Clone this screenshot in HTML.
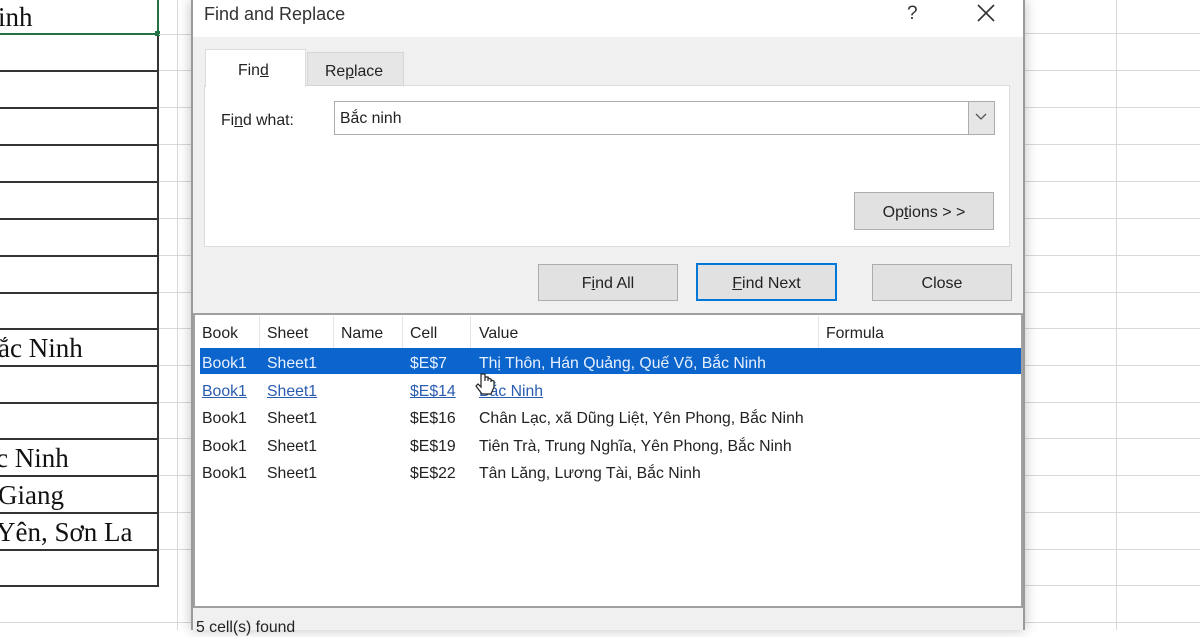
<!DOCTYPE html>
<html><head><meta charset="utf-8"><style>
*{margin:0;padding:0;box-sizing:border-box}
body{width:1200px;height:630px;overflow:hidden;background:#fff;position:relative;font-family:"Liberation Sans","DejaVu Sans",sans-serif;font-size:16px;color:#222}
.a{position:absolute}
.hl{position:absolute;height:2px;background:#333}
.gl{position:absolute;height:1px;background:#d8d8d8}
.vg{position:absolute;width:1px;background:#d8d8d8;top:0;height:630px}
.serif{font-family:"Liberation Serif",serif;font-size:27px;color:#111;position:absolute;left:0}
.btn{position:absolute;background:#e1e1e1;border:1px solid #adadad;text-align:center;font-size:16px;color:#222}
.t{position:absolute;font-size:15.8px;white-space:nowrap}
u{text-decoration:underline}
</style></head><body>
<div class="vg" style="left:157px;background:#333;width:2px;height:587px"></div>
<div class="vg" style="left:177px"></div>
<div class="a" style="left:0;top:33px;width:157px;height:2px;background:#217346"></div>
<div class="a" style="left:155px;top:31px;width:5px;height:5px;background:#217346"></div>
<div class="a" style="left:157px;top:0;width:2px;height:33px;background:#217346"></div>
<div class="hl" style="top:70px;width:157px"></div><div class="hl" style="top:107px;width:157px"></div>
<div class="hl" style="top:144px;width:157px"></div><div class="hl" style="top:181px;width:157px"></div>
<div class="hl" style="top:218px;width:157px"></div><div class="hl" style="top:255px;width:157px"></div>
<div class="hl" style="top:292px;width:157px"></div><div class="hl" style="top:328px;width:157px"></div>
<div class="hl" style="top:365px;width:157px"></div><div class="hl" style="top:402px;width:157px"></div>
<div class="hl" style="top:438px;width:157px"></div><div class="hl" style="top:475px;width:157px"></div>
<div class="hl" style="top:512px;width:157px"></div><div class="hl" style="top:549px;width:157px"></div>
<div class="hl" style="top:585px;width:157px"></div>
<div class="gl" style="left:159px;top:34px;width:33px"></div><div class="gl" style="left:159px;top:70px;width:33px"></div><div class="gl" style="left:159px;top:107px;width:33px"></div><div class="gl" style="left:159px;top:144px;width:33px"></div><div class="gl" style="left:159px;top:181px;width:33px"></div><div class="gl" style="left:159px;top:218px;width:33px"></div><div class="gl" style="left:159px;top:255px;width:33px"></div><div class="gl" style="left:159px;top:292px;width:33px"></div><div class="gl" style="left:159px;top:328px;width:33px"></div><div class="gl" style="left:159px;top:365px;width:33px"></div><div class="gl" style="left:159px;top:402px;width:33px"></div><div class="gl" style="left:159px;top:438px;width:33px"></div><div class="gl" style="left:159px;top:475px;width:33px"></div><div class="gl" style="left:159px;top:512px;width:33px"></div><div class="gl" style="left:159px;top:549px;width:33px"></div><div class="gl" style="left:0;top:622px;width:192px"></div>
<div class="serif" style="top:2px;left:-2px">inh</div>
<div class="serif" style="top:333px;left:-2px">ắc Ninh</div>
<div class="serif" style="top:443px;left:-4px">c Ninh</div>
<div class="serif" style="top:480px;left:-2px">Giang</div>
<div class="serif" style="top:517px;left:-4px">Yên, Sơn La</div>
<div class="vg" style="left:1116px"></div>
<div class="gl" style="left:1024px;top:33px;width:176px"></div><div class="gl" style="left:1024px;top:70px;width:176px"></div><div class="gl" style="left:1024px;top:107px;width:176px"></div><div class="gl" style="left:1024px;top:144px;width:176px"></div><div class="gl" style="left:1024px;top:181px;width:176px"></div><div class="gl" style="left:1024px;top:218px;width:176px"></div><div class="gl" style="left:1024px;top:255px;width:176px"></div><div class="gl" style="left:1024px;top:292px;width:176px"></div><div class="gl" style="left:1024px;top:328px;width:176px"></div><div class="gl" style="left:1024px;top:365px;width:176px"></div><div class="gl" style="left:1024px;top:402px;width:176px"></div><div class="gl" style="left:1024px;top:438px;width:176px"></div><div class="gl" style="left:1024px;top:475px;width:176px"></div><div class="gl" style="left:1024px;top:512px;width:176px"></div><div class="gl" style="left:1024px;top:549px;width:176px"></div><div class="gl" style="left:1024px;top:585px;width:176px"></div><div class="gl" style="left:1024px;top:622px;width:176px"></div>
<div class="a" style="left:191px;top:0;width:834px;height:630px;background:#f0f0f0;border-left:2px solid #9a9a9a;border-right:2px solid #9a9a9a;box-shadow:0 0 12px rgba(0,0,0,.25)"></div>
<div class="a" style="left:193px;top:0;width:830px;height:37px;background:#fff"></div>
<div class="t" style="left:204px;top:4px;font-size:18px;color:#333">Find and Replace</div>
<div class="t" style="left:907px;top:3px;font-size:19px;color:#333">?</div>
<svg class="a" style="left:977px;top:4px" width="18" height="18"><path d="M1 1L17 17M17 1L1 17" stroke="#333" stroke-width="1.6"/></svg>
<div class="a" style="left:204px;top:85px;width:806px;height:162px;background:#fff;border:1px solid #dcdcdc"></div>
<div class="a" style="left:307px;top:52px;width:97px;height:34px;background:#e6e6e6;border:1px solid #d6d6d6"></div>
<div class="a" style="left:205px;top:49px;width:101px;height:38px;background:#fff;border:1px solid #dcdcdc;border-bottom:none"></div>
<div class="t" style="left:238px;top:62px">Fin<u>d</u></div>
<div class="t" style="left:325px;top:63px">Re<u>p</u>lace</div>
<div class="t" style="left:221px;top:112px">Fi<u>n</u>d what:</div>
<div class="a" style="left:334px;top:101px;width:661px;height:34px;background:#fff;border:1px solid #acacac"></div>
<div class="a" style="left:968px;top:102px;width:26px;height:32px;background:#e6e6e6;border-left:1px solid #acacac"></div>
<svg class="a" style="left:975px;top:113px" width="12" height="8"><path d="M1 1L6 6L11 1" stroke="#555" fill="none" stroke-width="1.3"/></svg>
<div class="t" style="left:340px;top:110px">Bắc ninh</div>
<div class="btn" style="left:854px;top:192px;width:140px;height:38px;line-height:39px">Op<u>t</u>ions &gt; &gt;</div>
<div class="btn" style="left:538px;top:264px;width:140px;height:37px;line-height:38px">F<u>i</u>nd All</div>
<div class="btn" style="left:696px;top:263px;width:141px;height:38px;line-height:37px;border:2px solid #0078d7"><u>F</u>ind Next</div>
<div class="btn" style="left:872px;top:264px;width:140px;height:37px;line-height:38px">Close</div>
<div class="a" style="left:193px;top:313px;width:830px;height:295px;background:#fff;border:2px solid #a0a0a0"></div>
<div class="a" style="left:259px;top:316px;width:1px;height:32px;background:#e5e5e5"></div>
<div class="a" style="left:333px;top:316px;width:1px;height:32px;background:#e5e5e5"></div>
<div class="a" style="left:402px;top:316px;width:1px;height:32px;background:#e5e5e5"></div>
<div class="a" style="left:470px;top:316px;width:1px;height:32px;background:#e5e5e5"></div>
<div class="a" style="left:818px;top:316px;width:1px;height:32px;background:#e5e5e5"></div>
<div class="t" style="left:202px;top:325px">Book</div><div class="t" style="left:267px;top:325px">Sheet</div><div class="t" style="left:341px;top:325px">Name</div><div class="t" style="left:410px;top:325px">Cell</div><div class="t" style="left:479px;top:325px">Value</div><div class="t" style="left:826px;top:325px">Formula</div>
<div class="a" style="left:200px;top:348px;width:821px;height:26px;background:#0b65cc"></div>
<div class="t" style="left:202px;top:355px;color:#e8f0ff">Book1</div><div class="t" style="left:267px;top:355px;color:#e8f0ff">Sheet1</div><div class="t" style="left:410px;top:355px;color:#e8f0ff">$E$7</div><div class="t" style="left:479px;top:355px;color:#e8f0ff">Thị Thôn, Hán Quảng, Quế Võ, Bắc Ninh</div>
<div class="t" style="left:202px;top:383px;color:#2a5db0"><u>Book1</u></div><div class="t" style="left:267px;top:383px;color:#2a5db0"><u>Sheet1</u></div><div class="t" style="left:410px;top:383px;color:#2a5db0"><u>$E$14</u></div><div class="t" style="left:479px;top:383px;color:#2a5db0"><u>Bắc Ninh</u></div>
<svg class="a" style="left:474px;top:372px" width="24" height="28"><path d="M7 2v13l-3-3-2 2 6 8h9l3-7v-6l-3-1v2-3l-3-1v3-4l-3 0v4V2z" fill="#fff" stroke="#222" stroke-width="1.2"/></svg>
<div class="t" style="left:202px;top:410px">Book1</div><div class="t" style="left:267px;top:410px">Sheet1</div><div class="t" style="left:410px;top:410px">$E$16</div><div class="t" style="left:479px;top:410px">Chân Lạc, xã Dũng Liệt, Yên Phong, Bắc Ninh</div>
<div class="t" style="left:202px;top:438px">Book1</div><div class="t" style="left:267px;top:438px">Sheet1</div><div class="t" style="left:410px;top:438px">$E$19</div><div class="t" style="left:479px;top:438px">Tiên Trà, Trung Nghĩa, Yên Phong, Bắc Ninh</div>
<div class="t" style="left:202px;top:465px">Book1</div><div class="t" style="left:267px;top:465px">Sheet1</div><div class="t" style="left:410px;top:465px">$E$22</div><div class="t" style="left:479px;top:465px">Tân Lăng, Lương Tài, Bắc Ninh</div>
<div class="t" style="left:196px;top:619px">5 cell(s) found</div>
</body></html>
